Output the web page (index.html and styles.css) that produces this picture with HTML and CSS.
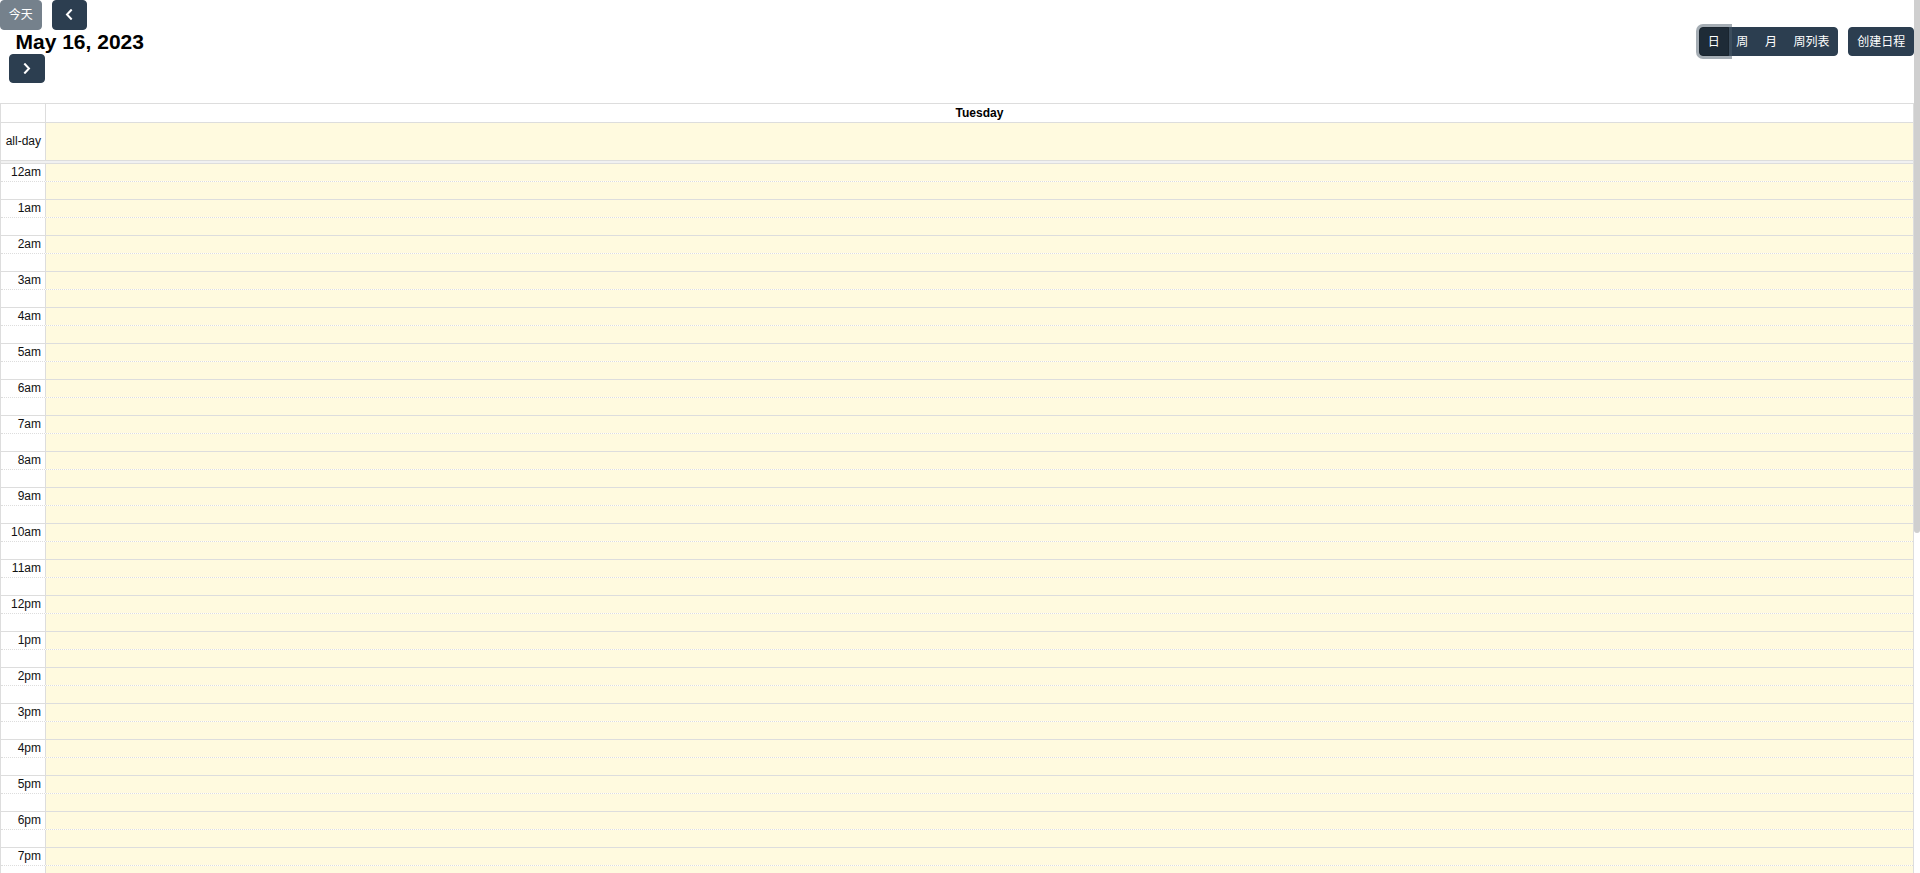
FILE: index.html
```html
<!DOCTYPE html>
<html lang="zh">
<head>
<meta charset="utf-8">
<title>Calendar</title>
<link rel="stylesheet" href="styles.css">
</head>
<body>
<div class="cal">
  <div class="toolbar">
    <div class="chunk-left">
      <div class="nav-row">
        <button class="btn btn-today" disabled>今天</button>
        <button class="btn btn-icon" aria-label="prev"><span class="ico"><svg width="8" height="11" viewBox="0 0 8 11"><path d="M6 1.2 L2 5.5 L6 9.8" fill="none" stroke="#fff" stroke-width="2" stroke-linecap="square"/></svg></span></button>
      </div>
      <h2 class="title">May 16, 2023</h2>
      <div class="next-row">
        <button class="btn btn-icon" aria-label="next"><span class="ico"><svg width="8" height="11" viewBox="0 0 8 11"><path d="M2 1.2 L6 5.5 L2 9.8" fill="none" stroke="#fff" stroke-width="2" stroke-linecap="square"/></svg></span></button>
      </div>
    </div>
    <div class="chunk-right">
      <div class="group">
        <button class="btn g-btn active">日</button>
        <button class="btn g-btn">周</button>
        <button class="btn g-btn">月</button>
        <button class="btn g-btn">周列表</button>
      </div>
      <button class="btn btn-create">创建日程</button>
    </div>
  </div>

  <div class="grid">
    <div class="row head-row"><div class="axis"></div><div class="day-head">Tuesday</div></div>
    <div class="row allday-row"><div class="axis label">all-day</div><div class="day"></div></div>
    <div class="divider"></div>
    <div class="slots" id="slots"></div>
  </div>
</div>
<div class="scrollbar" aria-hidden="true"><div class="thumb"></div></div>
<script>
(function(){
  var s = document.getElementById('slots');
  var html = '';
  for (var h = 0; h < 24; h++) {
    var hr = h % 12 === 0 ? 12 : h % 12;
    var lbl = hr + (h < 12 ? 'am' : 'pm');
    html += '<div class="row slot hour"><div class="axis label">' + lbl + '</div><div class="day"></div></div>';
    html += '<div class="row slot half"><div class="axis"></div><div class="day"></div></div>';
  }
  s.innerHTML = html;
})();
</script>
</body>
</html>
```

FILE: styles.css
```css
html { background: #fff; }

body {
  margin: 0;
  display: flex;
  align-items: flex-start;
  font-family: "Liberation Sans", Arial, "Noto Sans CJK SC", sans-serif;
  font-size: 12px;
  color: #111;
}

.cal { flex: 1; min-width: 0; }

.scrollbar {
  width: 6px;
  flex: none;
  align-self: stretch;
  background: #fff;
}
.thumb {
  height: 533px;
  background: #cfcfcf;
  border-radius: 0 0 3px 3px;
}

.toolbar {
  display: flex;
  justify-content: space-between;
  align-items: center;
  margin-bottom: 19.5px;
}

.chunk-left { display: flex; flex-direction: column; align-items: flex-start; }
.nav-row { display: flex; gap: 10px; }
.next-row { margin-left: 9px; }

.title {
  margin: 0 0 0 15.5px;
  font-size: 21px;
  font-weight: 700;
  line-height: 24px;
  color: #000;
}

.btn {
  font-family: "Liberation Sans", Arial, "Noto Sans CJK SC", sans-serif;
  font-size: 12px;
  line-height: 18px;
  padding: 4.8px 7.8px;
  border: 1px solid #2c3e50;
  background: #2c3e50;
  color: #fff;
  border-radius: 4px;
  cursor: pointer;
  display: inline-flex;
  align-items: center;
  justify-content: center;
}
.btn-today { opacity: 0.65; cursor: default; }
.ico { width: 18px; height: 18px; display: inline-flex; align-items: center; justify-content: center; }

.chunk-right { display: flex; align-items: center; gap: 10px; }
.group { display: flex; }
.g-btn { border-radius: 0; }
.g-btn + .g-btn { margin-left: -1px; }
.g-btn:first-child { border-radius: 4px 0 0 4px; }
.g-btn:last-child { border-radius: 0 4px 4px 0; }
.g-btn.active {
  background: #1e2b37;
  border-color: #1a252f;
  box-shadow: 0 0 0 3px rgba(76, 91, 106, 0.5);
  position: relative;
  z-index: 1;
}

.grid {
  border-top: 1px solid #ddd;
  border-left: 1px solid #ddd;
  border-right: 1px solid #ddd;
}
.row {
  display: grid;
  grid-template-columns: 45px 1fr;
}
.axis {
  border-right: 1px solid #ddd;
  background: #fff;
}
.label {
  display: flex;
  align-items: center;
  justify-content: flex-end;
  padding-right: 4px;
  white-space: nowrap;
}
.head-row { height: 18px; }
.day-head {
  text-align: center;
  font-weight: 700;
  line-height: 18px;
  color: #000;
}
.day { background: rgba(255, 220, 40, 0.15); }
.allday-row { border-top: 1px solid #ddd; height: 37px; }
.divider {
  border-top: 1px solid #ddd;
  height: 2px;
  background: rgba(208, 208, 208, 0.3);
}
.slot { height: 17px; }
.slot.hour { border-top: 1px solid #ddd; }
.slot.half { border-top: 1px dotted #ddd; }
.slots { border-bottom: 1px solid #ddd; }
```
